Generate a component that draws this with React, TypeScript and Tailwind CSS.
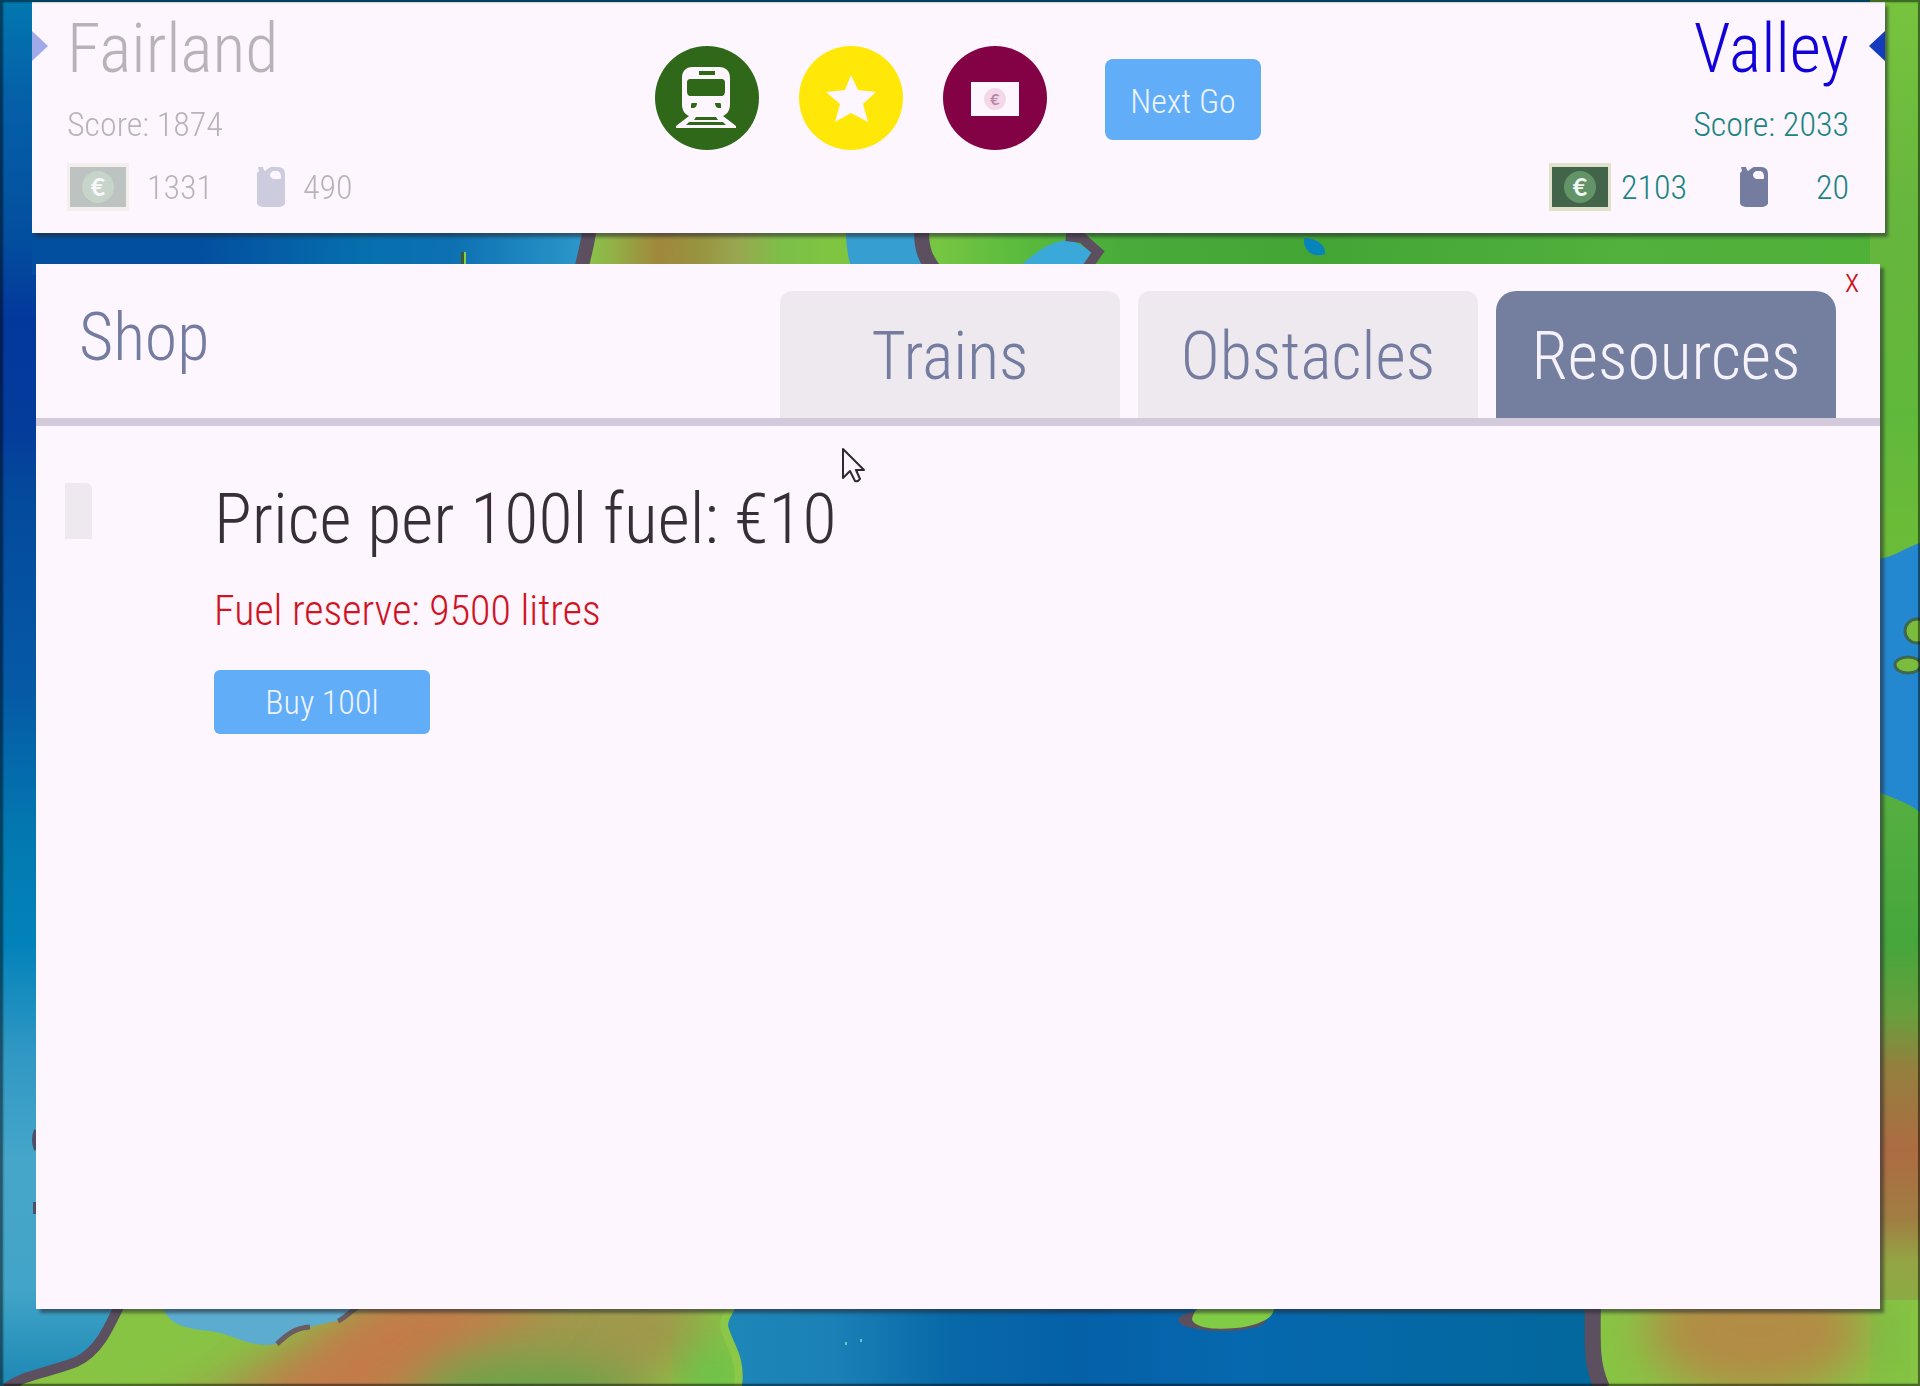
import type { ReactNode } from "react";

function MapBackground() {
  return (
    <svg
      className="absolute inset-0 h-full w-full"
      viewBox="0 0 1920 1386"
      preserveAspectRatio="none"
      aria-hidden="true"
    >
      <defs>
        <linearGradient id="sea" x1="0" y1="0" x2="0" y2="1">
          <stop offset="0" stopColor="#0278b0" />
          <stop offset="0.07" stopColor="#0560a8" />
          <stop offset="0.17" stopColor="#034f9f" />
          <stop offset="0.23" stopColor="#03389b" />
          <stop offset="0.31" stopColor="#043c9b" />
          <stop offset="0.35" stopColor="#04489c" />
          <stop offset="0.5" stopColor="#055aa6" />
          <stop offset="0.6" stopColor="#0378b0" />
          <stop offset="0.68" stopColor="#0282ba" />
          <stop offset="0.76" stopColor="#3098c4" />
          <stop offset="0.84" stopColor="#46a6ca" />
          <stop offset="0.93" stopColor="#42a4c8" />
          <stop offset="1" stopColor="#1c88b4" />
        </linearGradient>
        <linearGradient id="topSea" x1="0" y1="0" x2="1" y2="0">
          <stop offset="0" stopColor="#034f9f" />
          <stop offset="0.3" stopColor="#034f9f" />
          <stop offset="0.6" stopColor="#0670ae" />
          <stop offset="0.75" stopColor="#0d70b2" />
          <stop offset="1" stopColor="#2d9acb" />
        </linearGradient>
        <linearGradient id="topLand" x1="0" y1="0" x2="1" y2="0">
          <stop offset="0" stopColor="#86c84c" />
          <stop offset="0.12" stopColor="#92b046" />
          <stop offset="0.28" stopColor="#a0873c" />
          <stop offset="0.42" stopColor="#98933e" />
          <stop offset="0.56" stopColor="#9aa650" />
          <stop offset="0.72" stopColor="#7dbf48" />
          <stop offset="1" stopColor="#80c83e" />
        </linearGradient>
        <linearGradient id="topEast" x1="0" y1="0" x2="1" y2="0">
          <stop offset="0" stopColor="#7cc843" />
          <stop offset="0.1" stopColor="#5abb3d" />
          <stop offset="0.2" stopColor="#49ac3a" />
          <stop offset="0.4" stopColor="#43a634" />
          <stop offset="0.7" stopColor="#52b03c" />
          <stop offset="1" stopColor="#4fb138" />
        </linearGradient>
        <linearGradient id="eastEdge" x1="0" y1="0" x2="0" y2="1">
          <stop offset="0" stopColor="#76c43e" />
          <stop offset="0.15" stopColor="#67b63d" />
          <stop offset="0.3" stopColor="#60b83a" />
          <stop offset="0.39" stopColor="#6bbc38" />
          <stop offset="0.57" stopColor="#56b040" />
          <stop offset="0.68" stopColor="#46a63c" />
          <stop offset="0.73" stopColor="#66a03c" />
          <stop offset="0.77" stopColor="#94803e" />
          <stop offset="0.83" stopColor="#ac6c42" />
          <stop offset="0.88" stopColor="#a07e42" />
          <stop offset="0.91" stopColor="#94a444" />
          <stop offset="1" stopColor="#78b846" />
        </linearGradient>
        <linearGradient id="southSea" x1="0" y1="0" x2="1" y2="0">
          <stop offset="0" stopColor="#2088b8" />
          <stop offset="0.15" stopColor="#1a80b6" />
          <stop offset="0.28" stopColor="#0868a8" />
          <stop offset="0.42" stopColor="#0560a8" />
          <stop offset="0.6" stopColor="#0668ae" />
          <stop offset="1" stopColor="#03689c" />
        </linearGradient>
        <filter id="blur" x="-50%" y="-50%" width="200%" height="200%">
          <feGaussianBlur stdDeviation="24" />
        </filter>
        <clipPath id="southLand">
          <path d="M118 1300 C104 1330 96 1352 72 1364 C40 1374 18 1378 5 1386 H738 C742 1356 728 1344 724 1326 C723 1316 732 1310 733 1300 Z" />
        </clipPath>
        <clipPath id="southEast">
          <path d="M1596 1300 H1920 V1386 H1606 C1598 1370 1596 1350 1596 1300 Z" />
        </clipPath>
      </defs>

      <rect width="1920" height="1386" fill="url(#sea)" />
      <rect x="32" y="225" width="560" height="50" fill="url(#topSea)" />
      <path d="M588 225 H860 V275 H580 Z" fill="url(#topLand)" />
      <path d="M846 225 H925 V275 H854 C846 255 846 240 846 225 Z" fill="#369ed0" />
      <path d="M920 225 H1920 V275 H935 Z" fill="url(#topEast)" />
      <path d="M590 225 C588 245 584 255 580 275" stroke="#5c4f60" strokeWidth="14" fill="none" />
      <path d="M922 225 C920 250 926 260 938 275" stroke="#5c4f60" strokeWidth="15" fill="none" />
      <path d="M1018 268 C1036 252 1050 240 1072 240 L1092 252 L1080 270 Z" fill="#3aa8d8" />
      <path d="M1066 236 L1082 238 L1098 252 L1084 272" stroke="#5c4f60" strokeWidth="10" fill="none" />
      <path d="M1304 238 C1318 238 1326 246 1325 254 C1314 258 1303 252 1304 238 Z" fill="#0884bc" />
      <rect x="461" y="252" width="3" height="14" fill="#3e5a30" />
      <rect x="464" y="252" width="2" height="14" fill="#86d048" />

      <rect x="1870" width="50" height="1386" fill="url(#eastEdge)" />
      <path d="M1870 560 C1890 560 1904 548 1920 543 V812 C1904 800 1890 798 1870 788 Z" fill="#2488d0" />
      <ellipse cx="1917" cy="631" rx="12" ry="12" fill="#7cbc3c" stroke="#3e6650" strokeWidth="3" />
      <ellipse cx="1908" cy="665" rx="13" ry="8" fill="#7cbc3c" stroke="#3e6650" strokeWidth="3" />

      <rect x="700" y="1300" width="900" height="86" fill="url(#southSea)" />
      <g clipPath="url(#southLand)">
        <rect y="1300" width="760" height="86" fill="#88c444" />
        <path d="M130 1430 L420 1280 H690 L710 1340 L600 1430 Z" fill="#a0984c" filter="url(#blur)" />
        <path d="M210 1430 L380 1290 H560 L350 1430 Z" fill="#c47a4a" filter="url(#blur)" />
        <ellipse cx="530" cy="1395" rx="110" ry="34" fill="#68a448" filter="url(#blur)" />
        <ellipse cx="712" cy="1376" rx="20" ry="30" fill="#50c450" filter="url(#blur)" />
      </g>
      <path d="M733 1300 C732 1312 724 1314 724 1326 C728 1344 742 1356 738 1386" stroke="#8cc848" strokeWidth="8" fill="none" />
      <path d="M160 1300 C166 1318 172 1326 200 1330 C232 1332 240 1344 266 1345 C284 1346 290 1330 305 1328 L340 1320 L364 1300 Z" fill="#5cacd0" />
      <path d="M277 1344 C284 1338 292 1328 310 1327 M338 1321 C346 1318 350 1310 364 1304" stroke="#6a5c60" strokeWidth="5" fill="none" />
      <path d="M122 1300 C108 1330 98 1352 76 1362 C44 1374 26 1374 6 1388" stroke="#5c4f60" strokeWidth="10" fill="none" />
      <path d="M36 1130 q-4 10 0 20 M35 1202 v12" stroke="#4f5068" strokeWidth="4" fill="none" />
      <ellipse cx="1222" cy="1320" rx="44" ry="11" fill="#5c4f60" />
      <path d="M1192 1319 C1194 1308 1204 1300 1222 1300 H1272 C1282 1318 1256 1326 1236 1328 C1214 1330 1194 1328 1192 1319 Z" fill="#80cc44" />
      <rect x="845" y="1342" width="2" height="3" fill="#62c8c0" />
      <rect x="860" y="1339" width="2" height="3" fill="#62c8c0" />
      <g clipPath="url(#southEast)">
        <rect x="1590" y="1300" width="330" height="86" fill="#88c444" />
        <ellipse cx="1756" cy="1330" rx="110" ry="66" fill="#b28c44" filter="url(#blur)" />
        <rect x="1880" y="1300" width="20" height="86" fill="#6cbc40" filter="url(#blur)" />
      </g>
      <path d="M1593 1300 C1592 1350 1592 1366 1602 1388" stroke="#5c4f60" strokeWidth="16" fill="none" />
    </svg>
  );
}

function BankNote() {
  return (
    <svg className="h-12 w-[62px] shrink-0" viewBox="0 0 62 48" role="img" aria-label="Money">
      <rect width="62" height="48" fill="#e2e2cc" />
      <rect x="3" y="4" width="56" height="40" fill="#42644a" />
      <circle cx="31" cy="24" r="16" fill="#639468" />
      <text x="31" y="33" textAnchor="middle" fontFamily="Lato" fontWeight="700" fontSize="25" fill="#f2fbf4">
        €
      </text>
    </svg>
  );
}

function FuelCan() {
  return (
    <svg className="h-10 w-[30px] shrink-0" viewBox="0 0 30 40" role="img" aria-label="Fuel">
      <path
        fillRule="evenodd"
        fill="#747ca0"
        d="M2 0 H7 L8 3 L9 4 L13 1 C14 0 15 0 16 0 H22 C27 0 29 3 29 7 V36 C29 38 26 40 22 40 H8 C4 40 1 38 1 36 V6 L3 4 Z M18 4 C16 4 14 6 14 8 C14 10 16 12 18 12 H24 C25 12 25 11 25 10 C25 6 23 4 21 4 Z"
      />
    </svg>
  );
}

function RoundButton({ label, className, children }: { label: string; className: string; children: ReactNode }) {
  return (
    <button type="button" aria-label={label} className={`size-[104px] shrink-0 rounded-full ${className}`}>
      <svg className="size-full" viewBox="0 0 104 104" aria-hidden="true">
        {children}
      </svg>
    </button>
  );
}

function GameHeader() {
  return (
    <header className="relative mt-0.5 mr-[35px] ml-8 grid grid-cols-[1fr_auto_1fr] bg-[#fdf6ff] pt-[11px] pr-9 pb-[22px] pl-[35px] shadow-[3px_4px_3px_rgba(40,40,50,0.55)]">
      <svg className="absolute top-[29px] left-0 h-[30px] w-4" viewBox="0 0 16 30" aria-hidden="true">
        <path d="M0 0 L16 15 L0 30 Z" fill="#a0aae8" />
      </svg>
      <svg className="absolute top-[29px] right-0 h-[30px] w-4" viewBox="0 0 16 30" aria-hidden="true">
        <path d="M16 0 L0 15 L16 30 Z" fill="#143cbc" />
      </svg>

      <section className="flex flex-col gap-[21px] text-[#3c343c] opacity-35">
        <h2 className="text-[68px] leading-[72px]">Fairland</h2>
        <p className="text-[34px] leading-9">Score: 1874</p>
        <div className="flex items-center text-[34px] leading-9">
          <BankNote />
          <span className="ml-[18px] w-[109px]">1331</span>
          <FuelCan />
          <span className="ml-[17px]">490</span>
        </div>
      </section>

      <div className="mt-[33px] flex items-center gap-10 self-start">
        <RoundButton label="Trains" className="bg-[#2f6818]">
          <path
            fill="#fdf6ff"
            fillRule="evenodd"
            d="M37 21 H64 C71 21 75 25 75 32 V58 C75 65 72 68 68 70 L81 80 V82 H21 V80 L34 70 C30 68 27 65 27 58 V32 C27 25 31 21 37 21 Z M44 25 V29 H60 V25 Z M36 33 C33 33 32 34 32 37 V45 C32 48 33 50 36 50 H66 C69 50 70 48 70 45 V37 C70 34 69 33 66 33 Z M37 57 Q36 57 36 59 V62 H39 Q42 61 42 57 Z M60 57 Q60 61 63 62 H66 V59 Q66 57 65 57 Z M41 71 L39 74 H63 L61 71 Z M34 76 L31 79 H71 L68 76 Z"
          />
        </RoundButton>
        <RoundButton label="Goals" className="bg-[#ffe808]">
          <path
            fill="#fdf6ff"
            d="M52 29 L59 44 L77 46 L64 58 L69 76 L52 67 L36 76 L41 58 L27 46 L46 44 Z"
          />
        </RoundButton>
        <RoundButton label="Shop" className="bg-[#830246]">
          <rect x="28" y="36" width="48" height="34" fill="#fdf6ff" />
          <circle cx="52" cy="53" r="11" fill="#f4d8ea" />
          <text x="52" y="59" textAnchor="middle" fontFamily="Lato" fontWeight="700" fontSize="16" fill="#b888a4">
            €
          </text>
        </RoundButton>
        <button
          type="button"
          className="mt-[3px] ml-[18px] h-[81px] w-[156px] rounded-lg bg-[#62adf7] pt-0.5 text-[34px] leading-9 text-[#eef4ff]"
        >
          Next Go
        </button>
      </div>

      <section className="flex flex-col gap-[21px] text-right text-[#1a8480]">
        <h2 className="text-[68px] leading-[72px] text-[#1200d8]">Valley</h2>
        <p className="text-[34px] leading-9">Score: 2033</p>
        <div className="flex items-center justify-end text-[34px] leading-9">
          <BankNote />
          <span className="ml-2.5 w-[118px] text-left">2103</span>
          <FuelCan />
          <span className="w-20">20</span>
        </div>
      </section>
    </header>
  );
}

const tabs = [
  { name: "Trains", active: false },
  { name: "Obstacles", active: false },
  { name: "Resources", active: true },
];

function Shop() {
  return (
    <main className="relative mt-[31px] mr-10 mb-[77px] ml-9 flex-1 bg-[#fdf6ff] shadow-[4px_4px_3px_rgba(40,40,50,0.55)]">
      <div className="flex items-end justify-between border-b-8 border-[#d3cbdb] pr-11 pl-[43px]">
        <h1 className="self-start pt-[38px] text-[66px] leading-[72px] text-[#747ca0]">Shop</h1>
        <nav className="flex gap-[18px] pt-[27px]" role="tablist" aria-label="Shop sections">
          {tabs.map((tab) => (
            <button
              key={tab.name}
              type="button"
              role="tab"
              aria-selected={tab.active}
              className={
                tab.active
                  ? "h-[127px] w-[340px] rounded-t-[20px] bg-[#747fa0] pt-1 text-[66px] leading-[72px] text-[#f6f2fc]"
                  : "h-[127px] w-[340px] rounded-t-[12px] bg-[#eee9ef] pt-1 text-[66px] leading-[72px] text-[#747ca0]"
              }
            >
              {tab.name}
            </button>
          ))}
        </nav>
      </div>
      <button
        type="button"
        aria-label="Close shop"
        className="absolute top-0 right-3 size-8 font-['Roboto_Condensed'] text-[34px] leading-8 text-[#cc1420]"
      >
        x
      </button>

      <div className="flex pt-[55px] pl-[29px]">
        <div className="mt-0.5 h-14 w-[27px] rounded-tr-md bg-[#ede9ee]" />
        <div className="ml-[122px] flex flex-col items-start">
          <p className="pt-0.5 text-[70px] leading-[72px] text-[#382e38]">Price per 100l fuel: €10</p>
          <p className="mt-[34px] text-[42px] leading-[44px] text-[#d01422]">Fuel reserve: 9500 litres</p>
          <button
            type="button"
            className="mt-[37px] h-16 w-[216px] rounded-md bg-[#62adf7] text-[34px] leading-9 text-[#eef4ff]"
          >
            Buy 100l
          </button>
        </div>
      </div>

      <svg className="absolute top-[183px] left-[805px] h-9 w-6" viewBox="0 0 24 36" aria-hidden="true">
        <path
          d="M2 2 V31 L9 24 L14 34 Q17 35 19 32 L15 23 H23 Z"
          fill="#fdf6ff"
          stroke="#2e2a34"
          strokeWidth="2"
          strokeLinejoin="round"
        />
      </svg>
    </main>
  );
}

export default function App() {
  return (
    <div className="relative flex min-h-screen flex-col overflow-hidden bg-[#0560a8] font-['Roboto_Condensed_Light','Roboto_Condensed',sans-serif] font-light">
      <MapBackground />
      <GameHeader />
      <Shop />
      <div className="pointer-events-none absolute inset-0 border-2 border-black/45 shadow-[inset_1px_0_2px_rgba(0,0,0,0.5)]" />
    </div>
  );
}
